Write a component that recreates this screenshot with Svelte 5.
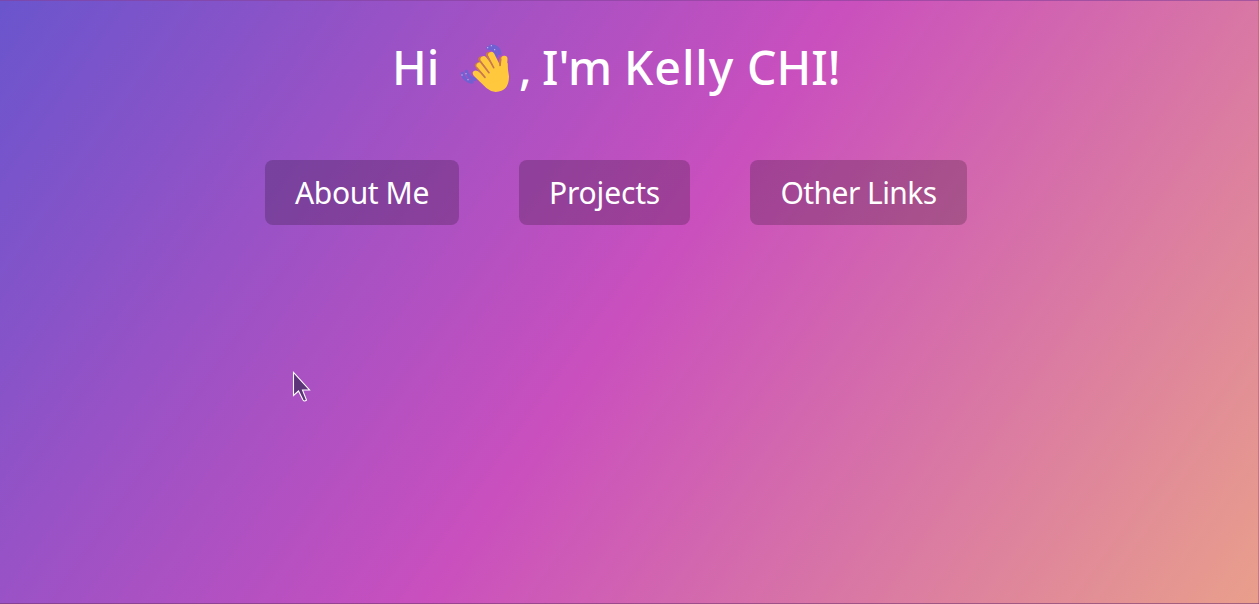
<script>
  const links = [
    { label: 'About Me', kind: 'about' },
    { label: 'Projects', kind: 'projects' },
    { label: 'Other Links', kind: 'other' }
  ];
</script>

<main>
  <h1>
    <span class="hi">Hi</span>
    <svg class="wave" viewBox="0 0 195 180" aria-label="waving hand">
      <g fill="none" stroke="#7060d2" stroke-width="10" stroke-linecap="round">
        <path d="M99 30Q121 31 124 54M108 24Q132 25 134 47M22 106Q27 128 51 132M34 100Q39 119 60 124" />
      </g>
      <g fill="none" stroke="#c7784f" stroke-width="17" stroke-linecap="round">
        <path d="M101 50L120 85M78 64L105 98M68 82L95 112M142 64L137 85" />
      </g>
      <path fill="#ffc83d" d="M53 103Q58 94 68 99L115 130L138 88Q152 84 158 74Q158 95 162 115Q162 161 122 162Q107 161 94 150L57 114Q52 109 53 103Z" />
      <path fill="#ffc83d" d="M88 113L108 82L126 76L145 90L137 125L105 136Z" />
      <g fill="none" stroke="#ffc83d" stroke-width="19" stroke-linecap="round">
        <path d="M109 51L129 91M86 64L116 102M74 83L106 118M148 63L146 94" />
      </g>
      <g fill="none" stroke="#c7784f" stroke-width="5" stroke-linecap="round">
        <path d="M98 56L116 89M77 72L102 104M66 90L90 118M137 64L135 82" />
      </g>
      <g fill="#c9bcef"><circle cx="98" cy="29" r="2" /><circle cx="109" cy="23" r="2" /><circle cx="119" cy="35" r="2" /><circle cx="21" cy="111" r="2" /><circle cx="33" cy="107" r="2" /><circle cx="39" cy="125" r="2" /></g>
    </svg>
    <span class="comma">,</span>
    <span class="im">I'm</span>
    <span class="first">Kelly</span>
    <span class="last">CHI!</span>
  </h1>

  <nav>
    {#each links as link}
      <a class={link.kind} href="#{link.kind}"><span>{link.label}</span></a>
    {/each}
  </nav>

  <svg class="cursor" viewBox="0 0 20 32" aria-hidden="true">
    <path d="M1.5 1.5V24.5L6.5 20L11 29Q12.5 31 14.5 29L10.5 19H17.5Z" fill="#5c3478" stroke="#fff" stroke-width="1.1" />
  </svg>
</main>

<style>
  :global(body) { margin: 0; overflow: hidden; }
  main {
    box-sizing: border-box;
    width: 1259px;
    height: 604px;
    position: relative;
    padding-top: 32px;
    color: #fff;
    font-family: "Noto Sans", "Open Sans", sans-serif;
    background: linear-gradient(125deg, #6a55cd, #c94fbe 50%, #e99f8b);
    box-shadow: inset 0 1px #85419a99, inset 0 -1px #783a7599, inset -1px 0 #b0627699;
  }
  h1 {
    display: flex;
    margin: 0 0 0 392px;
    height: 72px;
    line-height: 71px;
    font-size: 46.5px;
    font-weight: 500;
    white-space: nowrap;
  }
  h1 span { flex: none; }
  .hi { width: 63px; }
  .wave { width: 65px; height: 60px; margin-top: 6px; flex: none; }
  .comma { width: 23px; margin-left: -1px; }
  .im { width: 82px; }
  .first { width: 123px; letter-spacing: .9px; }
  nav {
    display: flex;
    gap: 60px;
    margin: 56px 0 0 265px;
  }
  a {
    box-sizing: border-box;
    height: 65px;
    border-radius: 8px;
    background: rgba(0, 0, 0, .2);
    color: #fff;
    text-decoration: none;
    text-align: center;
    font-size: 30px;
    letter-spacing: -.4px;
    line-height: 65px;
    white-space: nowrap;
  }
  .about { width: 194px; }
  .projects { width: 171px; letter-spacing: -.15px; }
  .other { width: 217px; letter-spacing: -.55px; }
  .cursor { position: absolute; left: 292px; top: 371px; width: 20px; height: 32px; }
</style>
